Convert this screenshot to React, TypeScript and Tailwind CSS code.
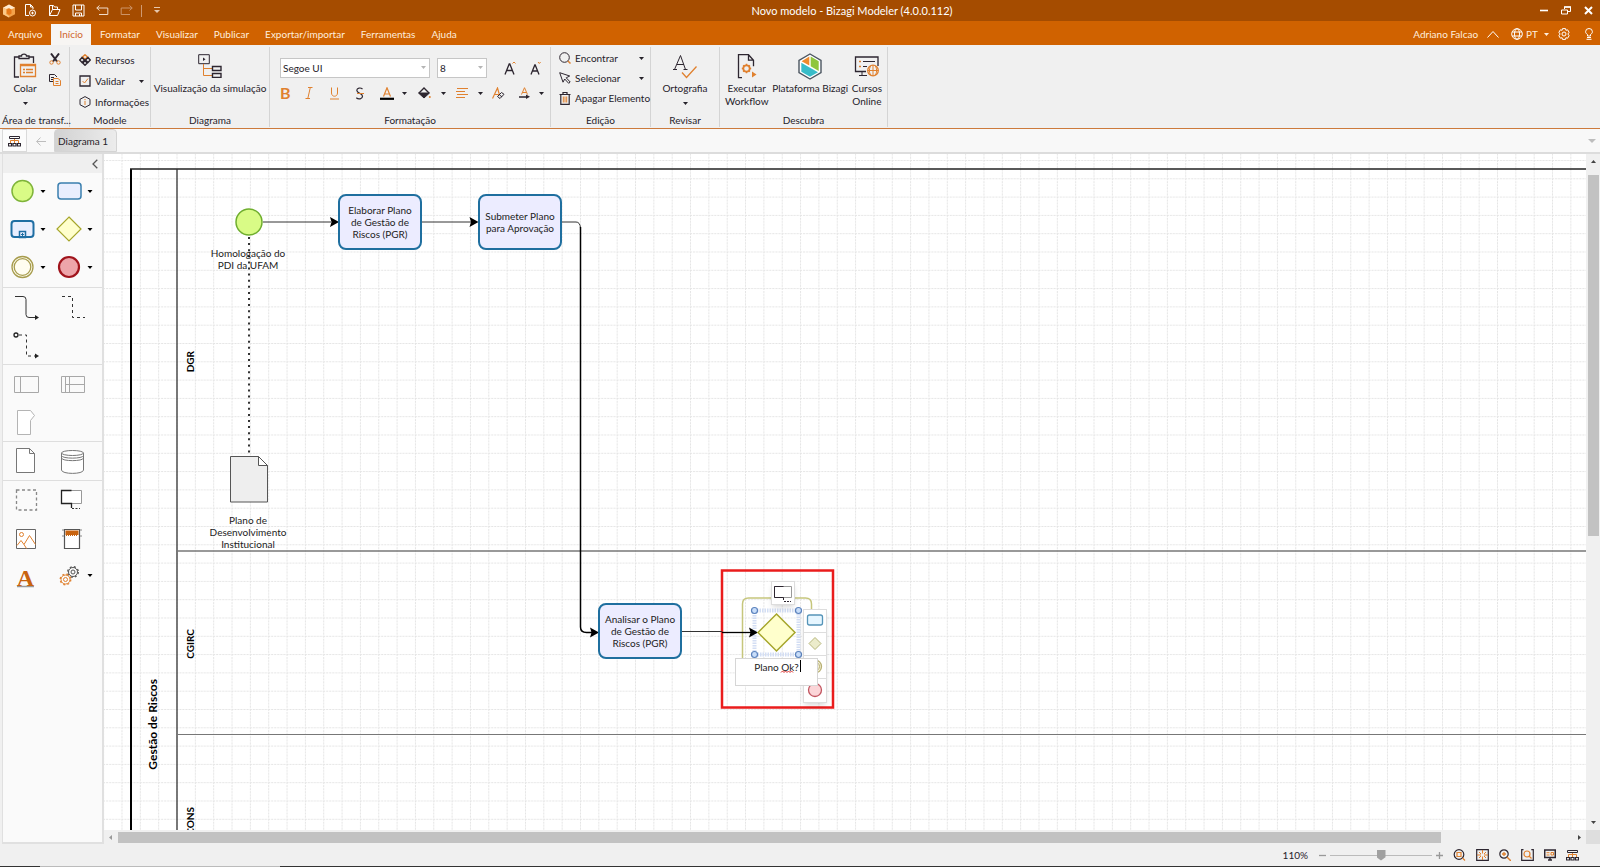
import type { ReactNode } from "react";

const DARK = "#2d2630";
const ORANGE = "#e0812f";

function Caret({ className = "" }: { className?: string }) {
  return (
    <svg viewBox="0 0 5 3" className={`h-[3px] w-[5px] shrink-0 ${className}`}>
      <path d="M0 0h5L2.5 3z" fill="currentColor" />
    </svg>
  );
}

type IconProps = {
  w: number;
  h: number;
  children: ReactNode;
  className?: string;
  stroke?: string;
};

function Icon({ w, h, children, className = "", stroke = DARK }: IconProps) {
  return (
    <svg
      width={w}
      height={h}
      viewBox={`0 0 ${w} ${h}`}
      fill="none"
      stroke={stroke}
      className={`shrink-0 ${className}`}
    >
      {children}
    </svg>
  );
}

function TitleBar() {
  return (
    <header className="relative flex h-[21px] shrink-0 items-center justify-between bg-[#a54c00] pr-[7px] pl-[2px] text-white">
      <div className="flex items-center">
        <Icon w={14} h={14} stroke="none">
          <path d="M7 .5 13 3.7v6.6L7 13.5 1 10.3V3.7z" fill="#f3a24a" />
          <path d="M7 .5 13 3.7 9 5.5 7 4 4 5 1 3.7z" fill="#ffe9cf" />
          <path d="M1 3.7 4 5v5l3 2v1.5L1 10.3z" fill="#fbc888" />
          <path d="M5 5.5 7 4.5l2.5 1v4L7 11 5 9.5z" fill="#e8791a" />
        </Icon>
        <button aria-label="Novo" className="ml-[8px]">
          <Icon w={13} h={13} stroke="#fff">
            <path d="M5 11.5H1.5v-11h5L9 3v2M6.5.5V3H9" />
            <circle cx="8.5" cy="9" r="3" />
            <path d="M8.5 7.7v2.6M7.2 9h2.6" />
          </Icon>
        </button>
        <button aria-label="Abrir" className="ml-[11px]">
          <Icon w={13} h={13} stroke="#fff">
            <path d="M1.5 11.5V1.5h4l1 1.5h3v2M1.5 11.5l3-6h7.5l-2.5 6z" />
            <path d="M4.5 5.5V2" />
          </Icon>
        </button>
        <button aria-label="Salvar" className="ml-[11px]">
          <Icon w={13} h={13} stroke="#fff">
            <path d="M1 1h11v11H1z" />
            <path d="M3.5 1v5h6V1M3.5 12V9h6v3M7.5 10v2" />
          </Icon>
        </button>
        <button aria-label="Desfazer" className="ml-[11px]">
          <Icon w={13} h={11} stroke="#f0dccb">
            <path d="M3.5.5.8 3l2.7 2.5M.8 3h11v6.5H3" />
          </Icon>
        </button>
        <button aria-label="Refazer" className="ml-[11px]">
          <Icon w={13} h={11} stroke="#cc9468">
            <path d="M9.5.5 12.2 3 9.5 5.5M12.2 3h-11v6.5H10" />
          </Icon>
        </button>
        <span className="ml-[8px] h-3 w-px bg-[#cf9a72]" />
        <button aria-label="Personalizar" className="ml-[12px]">
          <Icon w={6} h={7} stroke="#e6c7ad">
            <path d="M0 .5h6" />
            <path d="M0 3h6L3 6z" fill="#e6c7ad" stroke="none" />
          </Icon>
        </button>
      </div>
      <h1 className="pointer-events-none absolute inset-x-0 pl-[104px] text-center text-[11px] leading-[20px]">
        Novo modelo - Bizagi Modeler (4.0.0.112)
      </h1>
      <div className="flex items-center gap-[13px]">
        <button aria-label="Minimizar">
          <Icon w={8} h={9} stroke="#fff">
            <path d="M0 4.5h8" strokeWidth="1.6" />
          </Icon>
        </button>
        <button aria-label="Restaurar">
          <Icon w={10} h={9} stroke="#fff">
            <path d="M3.5 3V1h6v4.5H7" />
            <path d="M3 1h7" strokeWidth="1.5" />
            <path d="M.5 4h6v4h-6z" />
          </Icon>
        </button>
        <button aria-label="Fechar">
          <Icon w={9} h={9} stroke="#fff">
            <path d="m1 1 7 7M8 1 1 8" strokeWidth="2" />
          </Icon>
        </button>
      </div>
    </header>
  );
}

const TABS = [
  "Arquivo",
  "Início",
  "Formatar",
  "Visualizar",
  "Publicar",
  "Exportar/importar",
  "Ferramentas",
  "Ajuda",
];

function MenuBar() {
  return (
    <nav className="flex h-[24px] shrink-0 items-end justify-between bg-[#d06200] pr-[7px] text-[10px] text-[#ffeede]">
      <div className="flex leading-[21px]">
        {TABS.map((tab) => (
          <button
            key={tab}
            className={
              tab === "Início"
                ? "mx-px bg-[#f7f5f3] px-2 text-[#d0662f]"
                : "px-2"
            }
          >
            {tab}
          </button>
        ))}
      </div>
      <div className="flex h-[22px] items-center">
        <span>Adriano Falcao</span>
        <button aria-label="Recolher faixa" className="ml-[9px]">
          <Icon w={12} h={7} stroke="#fff">
            <path d="m.5 6.5 5.5-6 5.5 6" />
          </Icon>
        </button>
        <button className="ml-[12px] flex items-center">
          <Icon w={12} h={12} stroke="#fff">
            <circle cx="6" cy="6" r="5.3" />
            <ellipse cx="6" cy="6" rx="2.5" ry="5.3" />
            <path d="M1.2 4h9.6M1.2 8h9.6" />
          </Icon>
          <span className="ml-[3px]">PT</span>
          <Caret className="ml-[6px]" />
        </button>
        <button aria-label="Configurações" className="ml-[9px]">
          <Icon w={12} h={12} stroke="#fff">
            <path d="M4.5.6h3l.4 1.7 1.7-.5 1.5 2.5L9.9 6l1.2 1.7-1.5 2.5-1.7-.5-.4 1.7h-3l-.4-1.7-1.7.5L.9 7.7 2.100 6 .9 4.3l1.5-2.5 1.7.5z" />
            <circle cx="6" cy="6" r="2" />
          </Icon>
        </button>
        <button aria-label="Ajuda rápida" className="ml-[15px]">
          <Icon w={8} h={12} stroke="#fff">
            <path d="M2.5 8V6.5C1 5.5.6 4.7.6 3.7a3.4 3.2 0 0 1 6.8 0c0 1-.4 1.8-1.9 2.8V8zM2 9.5h4M1.5 11.3h5" />
          </Icon>
        </button>
      </div>
    </nav>
  );
}

function Group({
  label,
  className,
  children,
}: {
  label: string;
  className: string;
  children: ReactNode;
}) {
  return (
    <section
      className={`flex shrink-0 flex-col border-r border-[#d4d4d4] ${className}`}
    >
      <div className="h-[67px]">{children}</div>
      <h2 className="text-center leading-[14px] whitespace-nowrap">{label}</h2>
    </section>
  );
}

function BigButton({
  icon,
  label,
  caret,
  className = "",
}: {
  icon: ReactNode;
  label: ReactNode;
  caret?: boolean;
  className?: string;
}) {
  return (
    <button
      className={`flex flex-col items-center text-center leading-[13px] whitespace-nowrap ${className}`}
    >
      <span className="flex h-[32px] items-center">{icon}</span>
      <span>{label}</span>
      {caret && <Caret className="mt-[7px]" />}
    </button>
  );
}

function RowButton({
  icon,
  label,
  caret,
}: {
  icon: ReactNode;
  label: string;
  caret?: boolean;
}) {
  return (
    <button className="flex h-5 w-full items-center gap-1 whitespace-nowrap">
      <span className="flex w-3 justify-center">{icon}</span>
      <span>{label}</span>
      {caret && <Caret className="ml-auto" />}
    </button>
  );
}

function Clipboard() {
  return (
    <Icon w={24} h={26}>
      <path d="M6 4H1.5v20H6M16 4h4.5v6M6 5.5V3h2.5C8.5.5 13.5.5 13.5 3H16v2.5z" strokeWidth="1.3" />
      <path d="M7.5 11.5h15v12h-15z" stroke={ORANGE} strokeWidth="1.3" />
      <path d="M7 12.5h16M10 16.5h2M13 16.5h7M10 19.5h2M13 19.5h7" stroke={ORANGE} strokeWidth="1.5" />
    </Icon>
  );
}

function Ribbon() {
  return (
    <div className="flex h-[84px] shrink-0 border-b border-[#cc7a3c] bg-[#f0f0f0] pt-[2px] pb-px text-[10px] text-[#26222a]">
      <Group label="Área de transf..." className="w-[70px] pl-[2px]">
        <div className="flex justify-between pr-2 pl-[11px]">
          <BigButton
            icon={<Clipboard />}
            label="Colar"
            caret
            className="pt-[3px]"
          />
          <div className="flex flex-col gap-[9px] pt-[6px]">
            <button aria-label="Recortar">
              <Icon w={12} h={12}>
                <path d="m2 .5 6 8M10 .5l-6 8" strokeWidth="2" />
                <circle cx="2.5" cy="9.5" r="1.7" stroke={ORANGE} />
                <circle cx="9.5" cy="9.5" r="1.7" stroke={ORANGE} />
              </Icon>
            </button>
            <button aria-label="Copiar">
              <Icon w={12} h={12}>
                <path d="M4 7.5H.5v-7h5L8 3M2 3.5h3M2 5.5h2" />
                <path d="M4.5 4.5h4.5l2.5 2v5h-7zM6.5 7.5h3M6.5 9.5h3" stroke={ORANGE} />
              </Icon>
            </button>
          </div>
        </div>
      </Group>

      <Group label="Modele" className="w-[81px]">
        <div className="flex flex-col gap-px pt-[3px] pr-[6px] pl-[9px]">
          <RowButton
            label="Recursos"
            icon={
              <Icon w={12} h={12}>
                <path d="M6 .8 8.5 3 6 5.2 3.5 3z" stroke={ORANGE} strokeWidth="1.5" />
                <path d="M3 3.5 5.5 6 3 8.5.7 6zM9 3.5 11.3 6 9 8.5 6.5 6zM6 6.8l2.2 2.2L6 11.2 3.8 9z" strokeWidth="1.5" />
              </Icon>
            }
          />
          <RowButton
            label="Validar"
            caret
            icon={
              <Icon w={12} h={12}>
                <path d="M1 1h10v10H1z" strokeWidth="1.3" />
                <path d="M3.5 6 5.5 8l3.5-4.5" stroke={ORANGE} />
              </Icon>
            }
          />
          <RowButton
            label="Informações"
            icon={
              <Icon w={12} h={12}>
                <path d="m6 .6 5 2.7v5.4l-5 2.7-5-2.7V3.3z" />
                <path d="M6 3v1.2M6 5v4" stroke={ORANGE} />
              </Icon>
            }
          />
        </div>
      </Group>

      <Group label="Diagrama" className="w-[119px]">
        <BigButton
          label="Visualização da simulação"
          className="w-full pt-[3px]"
          icon={
            <Icon w={24} h={24}>
              <path d="M.7.7h10.6v9H.7z" />
              <path d="M5 3.5v3.5l2.5-1.75z" fill={DARK} stroke="none" />
              <path d="M5.5 10v11.5H14M5.5 14.5H14" stroke={ORANGE} />
              <path d="M14.5 12.5h8.5v4h-8.5zM14.5 19.5h8.5v4h-8.5z" strokeWidth="1.4" />
            </Icon>
          }
        />
      </Group>

      <Group label="Formatação" className="w-[281px]">
        <FontControls />
      </Group>

      <Group label="Edição" className="w-[100px]">
        <div className="flex flex-col pt-px pr-[6px] pl-[8px]">
          <RowButton
            label="Encontrar"
            caret
            icon={
              <Icon w={12} h={12}>
                <circle cx="5.5" cy="5.5" r="4.8" />
                <path d="m9 9 2.5 2.5" stroke={ORANGE} strokeWidth="1.5" />
              </Icon>
            }
          />
          <RowButton
            label="Selecionar"
            caret
            icon={
              <Icon w={12} h={12}>
                <path d="m.7.7 10 3.3L7.2 5.8l4 4.2-1.5 1.3-4-4.3-1.7 3.2z" />
              </Icon>
            }
          />
          <RowButton
            label="Apagar Elemento"
            icon={
              <Icon w={12} h={13}>
                <path d="M.5 2.5h11M4 2.5v-2h4v2M1.8 3v9.3h8.4V3" strokeWidth="1.2" />
                <path d="M4.3 4.5v6M6 4.5v6M7.7 4.5v6" stroke={ORANGE} />
              </Icon>
            }
          />
        </div>
      </Group>

      <Group label="Revisar" className="w-[69px]">
        <BigButton
          label="Ortografia"
          caret
          className="w-full pt-[3px]"
          icon={
            <Icon w={24} h={25}>
              <path d="M1.5 15.5 7.5 1.5l5 14M4 10.5h7M0 15.5h4M10.5 15.5h4" />
              <path d="m9 18.5 4.5 5L23.5 12.5" stroke={ORANGE} strokeWidth="1.3" />
            </Icon>
          }
        />
      </Group>

      <Group label="Descubra" className="w-[168px]">
        <div className="flex justify-between px-[5px] pt-[3px]">
          <BigButton
            label={
              <>
                Executar
                <br />
                Workflow
              </>
            }
            icon={
              <Icon w={20} h={25}>
                <path d="M5 23.7H1.5V.7h10l5 5.5v6M11.5.7v5.5h5" strokeWidth="1.3" />
                <circle cx="9.5" cy="14.5" r="3.2" stroke={ORANGE} strokeWidth="1.8" />
                <path d="M9.5 9.8v1.5M9.5 17.7v1.5M4.8 14.5h1.5M12.7 14.5h1.5M6.2 11.2l1 1M11.8 16.8l1 1M12.8 11.2l-1 1M7.2 16.8l-1 1" stroke={ORANGE} strokeWidth="1.5" />
                <path d="M15 17.5v6l4.5-3z" fill={ORANGE} stroke="none" />
              </Icon>
            }
          />
          <BigButton
            label="Plataforma Bizagi"
            icon={
              <Icon w={24} h={27} stroke="none">
                <path d="m12 1 11 6.3v12.4L12 26 1 19.7V7.3z" fill="#fff" stroke="#4b5560" strokeWidth="1.4" />
                <path d="M11.3 3.6v9L3.6 8.2z" fill="#ef8a2c" />
                <path d="m12.7 3.6 8 4.6V18l-8-4.7z" fill="#8fc63d" />
                <path d="M3.3 9.7 20 19.2 12 23.8l-8.7-5z" fill="#38bcc8" />
              </Icon>
            }
          />
          <BigButton
            label={
              <>
                Cursos
                <br />
                Online
              </>
            }
            icon={
              <Icon w={26} h={22}>
                <path d="M12 16.5H1.5V2h22.5v9" strokeWidth="1.3" />
                <path d="M5 20.5h8M8 17v3M9 6.5h12M9 11.5h4" />
                <path d="M5 6.5h2M5 11.5h2" stroke={ORANGE} strokeWidth="1.5" />
                <circle cx="19" cy="15.5" r="5.3" stroke={ORANGE} fill="#f0f0f0" strokeWidth="1.3" />
                <path d="M19 10v11M13.7 15.5h10.6M16.5 11c-1.5 3-1.5 6 0 9M21.5 11c1.5 3 1.5 6 0 9" stroke={ORANGE} />
              </Icon>
            }
          />
        </div>
      </Group>
    </div>
  );
}

function FontControls() {
  return (
    <div className="pl-[10px]">
      <div className="flex h-[41px] items-center">
        <div className="relative flex items-center">
          <select
            aria-label="Fonte"
            className="h-5 w-[150px] appearance-none border border-[#c6c6c6] bg-white px-[2px] text-[10px] leading-4"
          >
            <option>Segoe UI</option>
          </select>
          <Caret className="pointer-events-none absolute right-1 text-[#b5b5b5]" />
        </div>
        <div className="relative ml-[7px] flex items-center">
          <select
            aria-label="Tamanho"
            className="h-5 w-[50px] appearance-none border border-[#c6c6c6] bg-white px-[2px] text-[10px] leading-4"
          >
            <option>8</option>
          </select>
          <Caret className="pointer-events-none absolute right-1 text-[#b5b5b5]" />
        </div>
        <button aria-label="Aumentar fonte" className="ml-[17px]">
          <Icon w={12} h={14}>
            <path d="M1 13.5 5.2 3h.6L10 13.5M2.7 9.5h5.6" strokeWidth="1.3" />
            <path d="m8.5 2.5 1.5-1.5 1.5 1.5" stroke={ORANGE} />
          </Icon>
        </button>
        <button aria-label="Diminuir fonte" className="ml-[14px]">
          <Icon w={12} h={14}>
            <path d="M1 13.5 4.8 4h.4L9 13.5M2.5 10h5" strokeWidth="1.3" />
            <path d="m8 1 1.3 1.5L10.6 1" stroke={ORANGE} />
          </Icon>
        </button>
      </div>
      <div className="flex h-[10px] items-center">
        <button
          aria-label="Negrito"
          className="w-[25px] text-left text-[16px] font-bold text-[#e0812f]"
        >
          B
        </button>
        <button aria-label="Itálico" className="w-[25px] text-left">
          <Icon w={8} h={12} stroke={ORANGE}>
            <path d="M3 .5h4.5M.5 11.5H5M5.3.5l-2.5 11" />
          </Icon>
        </button>
        <button aria-label="Sublinhado" className="w-[25px]">
          <Icon w={9} h={13} stroke={ORANGE}>
            <path d="M1.5.5V6c0 4.3 6 4.3 6 0V.5M0 12h9" />
          </Icon>
        </button>
        <button aria-label="Tachado" className="w-[25px]">
          <Icon w={9} h={13}>
            <path d="M7.5 2C5.5.3 2 .8 1.8 3.3c0 3.5 5.7 2.5 5.7 6 0 2.7-4 3.5-6.2 1.5" strokeWidth="1.2" />
            <path d="M2 6.5h7" stroke={ORANGE} />
          </Icon>
        </button>
        <button aria-label="Cor da fonte" className="flex w-[38px] items-center gap-[8px]">
          <Icon w={14} h={13} stroke={ORANGE}>
            <path d="M3.5 9.5 7 .8l3.5 8.7M4.7 7h4.6" strokeWidth="1.2" />
            <path d="M0 11.8h14" stroke="#000" strokeWidth="2.2" />
          </Icon>
          <Caret />
        </button>
        <button aria-label="Preenchimento" className="flex w-[38px] items-center gap-[10px]">
          <Icon w={13} h={12}>
            <path d="M1 6 6 1l5 5" strokeWidth="1.4" />
            <path d="M.5 6H11.5L6 11z" fill={DARK} />
            <circle cx="11.8" cy="10" r="1" fill={ORANGE} stroke="none" />
          </Icon>
          <Caret />
        </button>
        <button aria-label="Alinhamento" className="flex w-[36px] items-center gap-[9px]">
          <Icon w={13} h={11} stroke={ORANGE}>
            <path d="M1 .5h11M0 3.5h9M1 6.5h11M0 9.5h9" />
          </Icon>
          <Caret />
        </button>
        <button aria-label="Limpar formatação" className="w-[27px]">
          <Icon w={13} h={13}>
            <path d="M.5 11.5 5.5 1l2 7M2.7 7.5h4" stroke={ORANGE} strokeWidth="1.2" />
            <path d="m5.5 9.5 4-4 2.5 1.8-4 4.2zM7.5 8l2.5 1.8" />
          </Icon>
        </button>
        <button aria-label="Direção do texto" className="flex items-center gap-[9px]">
          <Icon w={11} h={12}>
            <path d="M2.5 7.5 5.5.7l3 6.8M3.5 5.5h4" stroke={ORANGE} />
            <path d="M0 10h8" strokeWidth="1.5" />
            <path d="M7 7.5v4.5l4-2.2z" fill={DARK} stroke="none" />
          </Icon>
          <Caret />
        </button>
      </div>
    </div>
  );
}

function HierarchyIcon() {
  return (
    <Icon w={13} h={11}>
      <path d="M1.5.5h10v2h-10z" />
      <path d="M2.5 7V4.5h8V7M6.5 3v4" stroke={ORANGE} />
      <path d="M.5 7.5h3v2.5h-3zM5 7.5h3v2.5H5zM9.5 7.5h3v2.5h-3z" strokeWidth="1.2" />
    </Icon>
  );
}

function DocumentTabs() {
  return (
    <div className="flex h-[25px] shrink-0 items-stretch justify-between border-b-2 border-[#dcdcdc] bg-[#f8f8f8] pr-[4px] text-[10px] text-[#26222a]">
      <div className="flex">
        <button
          aria-label="Hierarquia"
          className="ml-[2px] flex w-[25px] items-center justify-center border border-[#dadada] bg-[#fcfcfc] pt-[2px]"
        >
          <HierarchyIcon />
        </button>
        <button aria-label="Voltar" className="flex w-[27px] items-center justify-center pt-px">
          <Icon w={10} h={9} stroke="#bdbdbd">
            <path d="M4.5.5.7 4.5l3.8 4M.7 4.5H10" />
          </Icon>
        </button>
        <button className="rounded-t-sm border border-[#d4d4d4] bg-linear-to-r from-[#d2d2d2] to-[#ececec] pt-[2px] pr-[8px] pl-[3px]">
          Diagrama 1
        </button>
      </div>
      <button aria-label="Lista de diagramas">
        <Icon w={8} h={4} stroke="none">
          <path d="M0 0h8L4 4z" fill="#bdbdbd" />
        </Icon>
      </button>
    </div>
  );
}

function Tool({
  label,
  menuX,
  children,
}: {
  label: string;
  menuX?: number;
  children: ReactNode;
}) {
  return (
    <button aria-label={label} className="h-[38px] w-[47px]">
      <svg width="47" height="38" viewBox="0 0 47 38" fill="none">
        {children}
        {menuX && <path d={`M${menuX - 2.5} 17h5l-2.5 3z`} fill="#000" />}
      </svg>
    </button>
  );
}

function ToolSection({ children }: { children: ReactNode }) {
  return (
    <div className="flex flex-wrap border-b border-[#dedede] last:border-b-0">
      {children}
    </div>
  );
}

function Palette() {
  return (
    <aside className="ml-[2px] flex w-[102px] shrink-0 flex-col border-r-2 border-b-2 border-l border-[#e0e0e0] bg-[#fafafa]">
      <div className="flex h-[19px] shrink-0 items-center justify-end bg-[#efefef] pr-[4px]">
        <button aria-label="Recolher paleta">
          <Icon w={6} h={10} stroke="#555">
            <path d="M5.3.7 1 5l4.3 4.3" strokeWidth="1.3" />
          </Icon>
        </button>
      </div>
      <ToolSection>
        <Tool label="Evento inicial" menuX={40}>
          <circle cx="19.5" cy="18" r="10.5" fill="#d9fb86" stroke="#7fb43a" strokeWidth="1.5" />
        </Tool>
        <Tool label="Tarefa" menuX={40}>
          <rect x="8" y="10" width="23" height="16" rx="3" fill="#e9eefe" stroke="#3a7fae" strokeWidth="1.5" />
        </Tool>
        <Tool label="Subprocesso" menuX={40}>
          <rect x="8.5" y="10" width="22" height="16" rx="3" fill="#e9eefe" stroke="#1f6ea3" strokeWidth="2" />
          <path d="M16.5 20.5h6v6h-6z" stroke="#1f6ea3" strokeWidth="1.5" />
          <path d="M19.5 22v3M18 23.5h3" stroke="#1f6ea3" />
        </Tool>
        <Tool label="Gateway" menuX={40}>
          <path d="m19 6 12 12-12 12L7 18z" fill="#ffffcc" stroke="#a6a62b" strokeWidth="1.2" />
        </Tool>
        <Tool label="Evento intermediário" menuX={40}>
          <circle cx="19.5" cy="18" r="10.5" fill="#fffdf0" stroke="#a79c4d" strokeWidth="1.3" />
          <circle cx="19.5" cy="18" r="8.3" stroke="#a79c4d" strokeWidth="1.3" />
        </Tool>
        <Tool label="Evento final" menuX={40}>
          <circle cx="19" cy="18" r="10" fill="#eda5aa" stroke="#a0141c" strokeWidth="2.2" />
        </Tool>
      </ToolSection>
      <ToolSection>
        <Tool label="Fluxo de sequência">
          <path d="M12 8.5h8q3 0 3 3v15q0 3 3 3h7" stroke="#333" />
          <path d="M32 27v5l4-2.5z" fill="#222" />
        </Tool>
        <Tool label="Associação">
          <path d="M12 8.5h10.5v21H35" stroke="#333" strokeDasharray="3 3" />
        </Tool>
        <Tool label="Fluxo de mensagem">
          <circle cx="13" cy="9" r="2" stroke="#222" strokeWidth="1.3" />
          <path d="M16 9h7.5v21H32" stroke="#333" strokeDasharray="3 3" />
          <path d="M32 27.5v5l4-2.5z" fill="#222" />
        </Tool>
      </ToolSection>
      <ToolSection>
        <Tool label="Piscina">
          <path d="M11.5 11.5h24v16h-24zM17.5 11.5v16" stroke="#a8a8a8" />
        </Tool>
        <Tool label="Raia">
          <path d="M11.5 11.5h23v16h-23zM15.5 11.5v16M19.5 11.5v16M15.5 19.5h19" stroke="#a8a8a8" />
        </Tool>
        <Tool label="Fase">
          <path d="M14.5 7.5h13l4 5-4 5v14h-13z" fill="#fff" stroke="#b4b4b4" />
        </Tool>
      </ToolSection>
      <ToolSection>
        <Tool label="Objeto de dados">
          <path d="M13.5 6.5h13l5 5v19h-18zM26.5 6.5v5h5" fill="#fff" stroke="#777" />
        </Tool>
        <Tool label="Depósito de dados">
          <path d="M11.5 11v17c0 4.5 22 4.5 22 0V11" fill="#fff" stroke="#777" />
          <ellipse cx="22.5" cy="11" rx="11" ry="2.5" fill="#fff" stroke="#777" />
          <path d="M11.5 13.5c0 3.5 22 3.5 22 0M11.5 16c0 3.5 22 3.5 22 0" stroke="#777" />
        </Tool>
      </ToolSection>
      <ToolSection>
        <Tool label="Grupo">
          <rect x="13.5" y="9" width="20" height="20" stroke="#888" strokeWidth="1.3" strokeDasharray="3 2.5" />
        </Tool>
        <Tool label="Anotação">
          <path d="M11.5 9.5h20v13h-20z" fill="#fff" stroke="#999" />
          <path d="M21.5 9.5h-10v13h10v4.5" stroke="#222" strokeWidth="1.3" />
          <path d="M22 27.5h8" stroke="#333" strokeDasharray="2 1.5" />
        </Tool>
        <Tool label="Imagem">
          <path d="M13.5 10.5h19v19h-19z" fill="#fff" stroke="#666" />
          <circle cx="18.5" cy="15.5" r="2" stroke={ORANGE} />
          <path d="m14 26.5 4-5 3 4 5.5-9 6 9M21 25.5l2.5 4" stroke={ORANGE} />
        </Tool>
        <Tool label="Cabeçalho">
          <path d="M14.5 10.5h15v19h-15z" fill="#fff" stroke="#555" strokeWidth="1.2" />
          <path d="M15.5 11.5h13v4.5h-13z" fill="#c8630f" />
          <path d="M16 16.5h12" stroke="#c8630f" strokeDasharray="1 1" />
          <path d="M13 10v2M31 10v2M13 16v2M31 16v2" stroke="#888" />
        </Tool>
        <Tool label="Texto formatado">
          <path d="M14 29.5h17" stroke="#999" strokeWidth="1.5" />
          <text x="22.5" y="28.5" textAnchor="middle" fontSize="24" fontWeight="700" fontFamily="Liberation Serif, serif" fill="#c8630f">
            A
          </text>
        </Tool>
        <Tool label="Artefatos personalizados" menuX={40}>
          <circle cx="23" cy="15" r="4.5" stroke="#555" />
          <circle cx="23" cy="15" r="5.3" stroke="#555" strokeDasharray="2 2.2" strokeWidth="1.3" />
          <circle cx="23" cy="15" r="2" stroke="#555" />
          <circle cx="15.5" cy="22.5" r="4.5" fill="#fafafa" stroke={ORANGE} />
          <circle cx="15.5" cy="22.5" r="5.3" stroke={ORANGE} strokeDasharray="2 2.2" strokeWidth="1.3" />
          <circle cx="15.5" cy="22.5" r="2" stroke={ORANGE} />
        </Tool>
      </ToolSection>
    </aside>
  );
}

const TASK_CLASS =
  "absolute flex h-[56px] w-[84px] items-center justify-center rounded-lg border-2 border-[#1f6f9f] bg-[#ececff] whitespace-nowrap";

const LANE_LABEL_CLASS =
  "absolute left-[80px] rotate-180 font-bold text-black [writing-mode:vertical-rl]";

function Canvas() {
  return (
    <main className="relative min-h-0 flex-1 overflow-hidden bg-white text-center text-[10px] leading-[12px] text-[#222]">
      <svg className="absolute inset-0 h-full w-full" fill="none">
        <defs>
          <pattern id="grid" x="17.5" y="6" width="18.34" height="18.3" patternUnits="userSpaceOnUse">
            <path d="M.5 0v18.3M0 .5h18.34" stroke="#e4e4e4" strokeDasharray="2 1" />
          </pattern>
        </defs>
        <rect width="100%" height="100%" fill="url(#grid)" />
        <path d="M27 1000V15" stroke="#000" strokeWidth="2" />
        <line x1="26" y1="15" x2="100%" y2="15" stroke="#222" strokeWidth="1.5" />
        <path d="M73 15v985" stroke="#333" strokeWidth="1.3" />
        <line x1="73" y1="397" x2="100%" y2="397" stroke="#777" strokeWidth="1.3" />
        <line x1="73" y1="580.5" x2="100%" y2="580.5" stroke="#777" />

        <path d="M159 68h68M317 68h50" stroke="#333" />
        <path d="m226 63 9 5-9 5 1.5-5zM365.5 63l9 5-9 5 1.5-5z" fill="#000" />
        <path d="M457 68h15q4 0 4.5 6" stroke="#333" />
        <path d="M476.5 73v400q0 5.500 6 5.500h6" stroke="#000" strokeWidth="1.5" />
        <path d="m486 473.5 9 5-9 5 1.5-5z" fill="#000" />

        <circle cx="145" cy="68" r="13" fill="#d9fb86" stroke="#6fae2e" strokeWidth="1.5" />
        <path d="M126.5 302.5h28l9 9v36.500h-37z" fill="#eee" stroke="#555" />
        <path d="M154.5 302.5v9h9z" fill="#fff" stroke="#555" />
      </svg>

      <div className={`${TASK_CLASS} top-[40px] left-[234px]`}>
        Elaborar Plano
        <br />
        de Gestão de
        <br />
        Riscos (PGR)
      </div>
      <div className={`${TASK_CLASS} top-[40px] left-[374px]`}>
        Submeter Plano
        <br />
        para Aprovação
      </div>
      <div className={`${TASK_CLASS} top-[449px] left-[494px]`}>
        Analisar o Plano
        <br />
        de Gestão de
        <br />
        Riscos (PGR)
      </div>
      <p className="absolute top-[93px] left-[94px] w-[100px]">
        Homologação do
        <br />
        PDI da UFAM
      </p>
      <p className="absolute top-[360px] left-[94px] w-[100px]">
        Plano de
        <br />
        Desenvolvimento
        <br />
        Institucional
      </p>

      <p className="absolute top-[525px] left-[42px] rotate-180 text-[12px] leading-[14px] font-bold text-black [writing-mode:vertical-rl]">
        Gestão de Riscos
      </p>
      <p className={`${LANE_LABEL_CLASS} top-[197px]`}>DGR</p>
      <p className={`${LANE_LABEL_CLASS} top-[475px]`}>CGIRC</p>
      <p className={`${LANE_LABEL_CLASS} top-[653px]`}>CONS</p>

      <svg className="absolute inset-0 h-full w-full" fill="none">
        <path d="M145 83v219" stroke="#000" strokeWidth="1.6" strokeDasharray="2 4.1" />
        <rect x="618" y="416.5" width="111" height="137" stroke="#ea1c1c" strokeWidth="2.5" />
        <path d="M638.5 508v-58q0-6 6-6h57q6 0 6 6v58" stroke="#c6c67c" strokeWidth="1.5" />
        <path d="M578 477.5h40" stroke="#333" />
        <path d="M618 478.5h30" stroke="#000" strokeWidth="1.3" />
        <rect x="650.5" y="456.5" width="44" height="44" stroke="#d3def4" strokeWidth="4" strokeDasharray="1.5 1" />
        <path d="m645 473.5 9 5-9 5 1.5-5z" fill="#000" />
        <path d="m672.5 460 18.5 18.5-18.5 18.5L654 478.5z" fill="#ffffcc" stroke="#a6a62b" strokeWidth="1.5" />
        <g fill="#c9defa" stroke="#5c83bd" strokeWidth="1.2">
          <circle cx="650.5" cy="456.5" r="3" />
          <circle cx="694.5" cy="456.5" r="3" />
          <circle cx="650.5" cy="500.5" r="3" />
          <circle cx="694.5" cy="500.5" r="3" />
        </g>
      </svg>

      <button
        aria-label="Adicionar anotação"
        className="absolute top-[427px] left-[667px] flex h-[24px] w-[24px] items-center justify-center border border-[#ddd] bg-white shadow-md"
      >
        <Icon w={20} h={20}>
          <path d="M1.5 3.5h17v11h-17z" stroke="#999" />
          <path d="M10.5 3.5h-9v11h9V17" />
          <path d="M11 18.5h7" strokeDasharray="2 1" />
        </Icon>
      </button>
      <div className="absolute top-[455px] left-[699px] flex w-[24px] flex-col divide-y divide-[#ddd] border border-[#ddd] bg-white shadow-md">
        <button aria-label="Adicionar tarefa" className="h-[23px]">
          <Icon w={22} h={22}>
            <rect x="3.5" y="5" width="15" height="10" rx="2" fill="#e6f6ff" stroke="#5594b8" strokeWidth="1.3" />
          </Icon>
        </button>
        <button aria-label="Adicionar gateway" className="h-[23px]">
          <Icon w={22} h={22}>
            <path d="m11 4.5 6 6-6 6-6-6z" fill="#ececcb" stroke="#b7b77c" />
          </Icon>
        </button>
        <button aria-label="Adicionar evento intermediário" className="h-[23px]">
          <Icon w={22} h={22}>
            <circle cx="11" cy="10.5" r="6.5" fill="#f4f1d8" stroke="#b8b073" strokeWidth="1.3" />
            <circle cx="11" cy="10.5" r="4.5" stroke="#b8b073" />
          </Icon>
        </button>
        <button aria-label="Adicionar evento final" className="h-[23px]">
          <Icon w={22} h={22}>
            <circle cx="11" cy="10" r="6.5" fill="#fbd5d8" stroke="#c25560" strokeWidth="1.3" />
          </Icon>
        </button>
      </div>
      <div className="absolute top-[504px] left-[631px]">
        <textarea
          aria-label="Nome do gateway"
          spellCheck={false}
          defaultValue="Plano Ok?"
          className="block h-[28px] w-[83px] resize-none overflow-hidden border border-[#d6d6d6] bg-white pt-[2px] text-center"
        />
        <svg className="pointer-events-none absolute inset-0" width="83" height="28" fill="none">
          <path d="m46 14.500 1.500-1.500 1.500 1.500 1.500-1.500 1.500 1.500 1.500-1.500 1.500 1.500 1.500-1.500 1.500 1.500" stroke="#d33" />
          <path d="M65.5 2v12" stroke="#000" />
        </svg>
      </div>
    </main>
  );
}

function VerticalScrollbar() {
  return (
    <div className="flex w-[14px] shrink-0 flex-col items-center justify-between bg-[#f0f0f0] py-[6px]">
      <Caret className="rotate-180 text-[#444]" />
      <div className="my-3 min-h-0 flex-1">
        <div className="h-[57%] w-[11px] bg-[#c2c2c2]" />
      </div>
      <Caret className="text-[#444]" />
    </div>
  );
}

function HorizontalScrollbar() {
  return (
    <div className="flex h-[14px] shrink-0 bg-[#f0f0f0]">
      <div className="flex min-w-0 flex-1 items-center justify-between px-1">
        <Caret className="rotate-90 text-[#999]" />
        <div className="mx-[5px] min-w-0 flex-1">
          <div className="h-[11px] w-[91%] bg-[#c2c2c2]" />
        </div>
        <Caret className="-rotate-90 text-[#444]" />
      </div>
      <div className="w-[14px] bg-[#dedede]" />
    </div>
  );
}

function StatusBar() {
  return (
    <footer className="flex h-[22px] shrink-0 items-center justify-end bg-[#f0f0f0] pr-[21px] text-[10px] text-[#26222a]">
      <label htmlFor="zoom">110%</label>
      <button aria-label="Reduzir zoom" className="ml-[11px]">
        <Icon w={7} h={7} stroke="#999">
          <path d="M0 3.5h7" strokeWidth="1.3" />
        </Icon>
      </button>
      <input
        id="zoom"
        type="range"
        defaultValue={50}
        className="mx-1 h-[11px] w-[102px] appearance-none bg-linear-to-b from-transparent from-45% via-[#bbb] via-50% to-transparent to-55% [&::-webkit-slider-thumb]:h-[11px] [&::-webkit-slider-thumb]:w-[9px] [&::-webkit-slider-thumb]:appearance-none [&::-webkit-slider-thumb]:bg-[#a0a0a0] [&::-webkit-slider-thumb]:[clip-path:polygon(0_0,100%_0,100%_70%,50%_100%,0_70%)]"
      />
      <button aria-label="Aumentar zoom">
        <Icon w={7} h={7} stroke="#999">
          <path d="M0 3.5h7M3.5 0v7" strokeWidth="1.3" />
        </Icon>
      </button>
      <div className="ml-[10px] flex items-center gap-[10px]">
        <button aria-label="Ajustar seleção">
          <Icon w={13} h={12}>
            <circle cx="6" cy="5.5" r="4.8" strokeWidth="1.2" />
            <path d="M4 3.5h4v4H4zM9.5 9l2.5 2.5" stroke={ORANGE} strokeWidth="1.2" />
          </Icon>
        </button>
        <button aria-label="Ajustar à tela">
          <Icon w={13} h={12}>
            <path d="M.7.7h11.6v10.6H.7z" strokeWidth="1.2" />
            <path d="M6.5 1v3.5M6.5 7.5V11M1 6h4M8 6h4M3 3l2 2M10 3 8 5M3 9l2-2M10 9 8 7" stroke={ORANGE} />
          </Icon>
        </button>
        <button aria-label="Aproximar">
          <Icon w={12} h={12}>
            <circle cx="5" cy="5" r="4.2" strokeWidth="1.2" />
            <path d="M3 5h4M5 3v4" stroke={ORANGE} strokeWidth="1.3" />
            <path d="m8 8 4 4" stroke={ORANGE} strokeWidth="1.5" />
          </Icon>
        </button>
        <button aria-label="Ajustar página">
          <Icon w={13} h={12}>
            <path d="M2.5.7H.7v10.6h11.6V.7h-2" strokeWidth="1.2" />
            <circle cx="6" cy="5" r="3" stroke={ORANGE} strokeWidth="1.2" />
            <path d="m8 7 2.5 2.5" stroke={ORANGE} strokeWidth="1.3" />
          </Icon>
        </button>
        <button aria-label="Apresentação">
          <Icon w={12} h={12}>
            <path d="M.7 1h10.6v7.5H.7z" strokeWidth="1.5" />
            <path d="M2.5 3.7h3M2.5 6h3M7 3.5h2.500V6H7z" stroke={ORANGE} />
            <path d="M4 11h4M6 9v2" strokeWidth="1.5" />
          </Icon>
        </button>
        <button aria-label="Visão geral">
          <HierarchyIcon />
        </button>
      </div>
    </footer>
  );
}

export default function App() {
  return (
    <div className="flex h-screen flex-col overflow-hidden bg-[#f0f0f0] font-['Lato','Segoe_UI',sans-serif]">
      <TitleBar />
      <MenuBar />
      <Ribbon />
      <DocumentTabs />
      <div className="flex min-h-0 flex-1">
        <Palette />
        <div className="flex min-w-0 flex-1 flex-col">
          <div className="flex min-h-0 flex-1">
            <Canvas />
            <VerticalScrollbar />
          </div>
          <HorizontalScrollbar />
        </div>
      </div>
      <StatusBar />
      <div className="flex h-px shrink-0">
        <div className="w-10 bg-[#333]" />
        <div className="w-60 bg-[#bbb]" />
        <div className="flex-1 bg-[#333]" />
      </div>
    </div>
  );
}
